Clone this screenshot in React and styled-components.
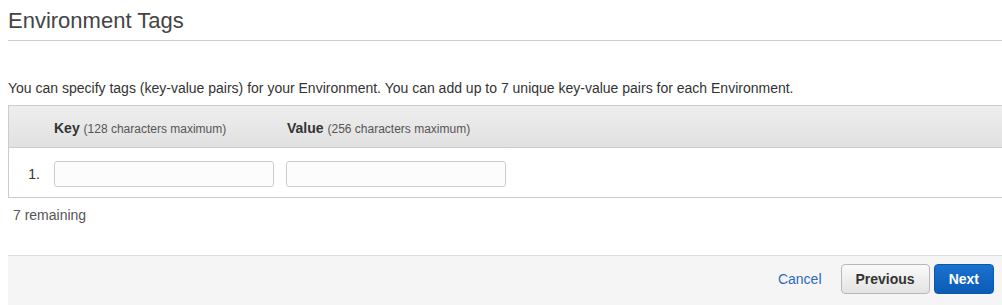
import React from "react";
import styled, { createGlobalStyle } from "styled-components";

const Global = createGlobalStyle`
  html, body { margin: 0; padding: 0; background: #fff; }
  body { font-family: "Liberation Sans", Arial, Helvetica, sans-serif; color: #333; }
  * { box-sizing: border-box; }
`;

const Page = styled.div`
  padding-left: 8px;
  width: 1002px;
`;

const Title = styled.h2`
  margin: 0;
  padding: 9px 0 7px;
  font-size: 22px;
  font-weight: normal;
  line-height: 24px;
  color: #444;
  border-bottom: 1px solid #ccc;
`;

const Intro = styled.p`
  margin: 39px 0 0;
  font-size: 14px;
  line-height: 16px;
  color: #333;
  height: 25px;
`;

const Table = styled.div`
  border: 1px solid #ccc;
  border-right: none;
`;

const HeadRow = styled.div`
  display: grid;
  grid-template-columns: 45px 233px 1fr;
  align-items: center;
  height: 42px;
  background: linear-gradient(#eeeeee, #e1e1e1);
  border-bottom: 1px solid #ccc;
`;

const HeadCell = styled.div`
  font-size: 14px;
  font-weight: bold;
  color: #333;
  padding-top: 2px;
`;

const Hint = styled.span`
  font-size: 12px;
  font-weight: normal;
  color: #555;
`;

const BodyRow = styled.div`
  display: grid;
  grid-template-columns: 45px 232px 1fr;
  align-items: center;
  height: 49px;
  padding-top: 3px;
`;

const Num = styled.div`
  font-size: 14px;
  color: #333;
  text-align: right;
  padding-right: 14px;
`;

const Field = styled.input`
  display: block;
  width: 220px;
  height: 26px;
  border: 1px solid #ccc;
  border-radius: 3px;
  background: #fcfcfc;
  padding: 0 6px;
  font-family: inherit;
  font-size: 14px;
  outline: none;
`;

const Remaining = styled.div`
  margin-top: 9px;
  padding-left: 5px;
  font-size: 14px;
  line-height: 16px;
  color: #555;
  height: 48px;
`;

const Footer = styled.div`
  border-top: 1px solid #ddd;
  background: #f5f5f5;
  height: 50px;
  display: flex;
  align-items: flex-start;
  justify-content: flex-end;
  padding: 8px 8px 0 0;
`;

const LinkButton = styled.a`
  font-size: 14px;
  line-height: 30px;
  color: #2c6bc4;
  text-decoration: none;
  margin-right: 19px;
  cursor: pointer;
`;

const Button = styled.button`
  height: 30px;
  padding: 0 14px;
  margin-right: ${(p) => (p.$primary ? "0" : "4px")};
  border-radius: 4px;
  font-family: inherit;
  font-size: 14px;
  font-weight: bold;
  cursor: pointer;
  border: 1px solid ${(p) => (p.$primary ? "#0b58ab" : "#b8b8b8")};
  color: ${(p) => (p.$primary ? "#fff" : "#333")};
  background: ${(p) =>
    p.$primary
      ? "linear-gradient(#1b72cf, #0b5bb6)"
      : "linear-gradient(#fafafa, #e3e3e3)"};
`;

export default function App() {
  return (
    <>
      <Global />
      <Page>
        <Title>Environment Tags</Title>
        <Intro>
          You can specify tags (key-value pairs) for your Environment. You can add up to 7 unique
          key-value pairs for each Environment.
        </Intro>
        <Table>
          <HeadRow>
            <div />
            <HeadCell>
              Key <Hint>(128 characters maximum)</Hint>
            </HeadCell>
            <HeadCell>
              Value <Hint>(256 characters maximum)</Hint>
            </HeadCell>
          </HeadRow>
          <BodyRow>
            <Num>1.</Num>
            <div>
              <Field />
            </div>
            <div>
              <Field />
            </div>
          </BodyRow>
        </Table>
        <Remaining>7 remaining</Remaining>
        <Footer>
          <LinkButton>Cancel</LinkButton>
          <Button>Previous</Button>
          <Button $primary>Next</Button>
        </Footer>
      </Page>
    </>
  );
}
